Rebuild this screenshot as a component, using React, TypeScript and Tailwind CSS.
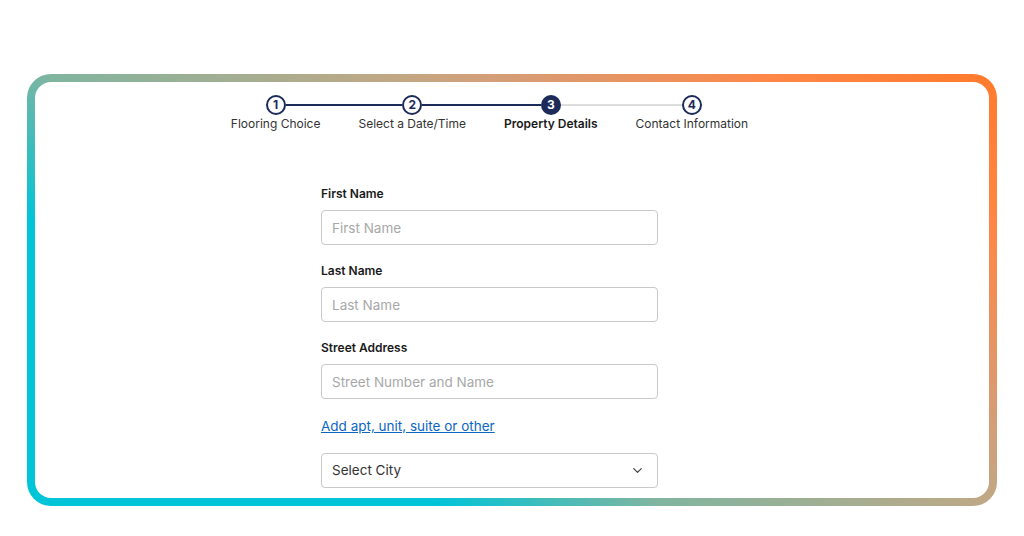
import { ChevronDown } from "lucide-react";

type Step = { n: number; label: string };

const steps: Step[] = [
  { n: 1, label: "Flooring Choice" },
  { n: 2, label: "Select a Date/Time" },
  { n: 3, label: "Property Details" },
  { n: 4, label: "Contact Information" },
];

const current = 3;

function lineClass(done: boolean) {
  return done ? "bg-[#1c2b5a]" : "bg-[#dddddd]";
}

function Stepper() {
  return (
    <div className="flex items-start">
      {steps.map((s, i) => {
        const leftDone = s.n <= current;
        const rightDone = s.n < current;
        return (
          <div key={s.n} className="flex items-start">
            {i > 0 && (
              <div className="flex h-5 w-[38px] items-center">
                <span className={`h-[2px] w-full ${lineClass(leftDone)}`} />
              </div>
            )}
            <div className="flex flex-col items-center">
              <div className="flex h-5 w-full items-center">
                <span className={`h-[2px] flex-1 ${i === 0 ? "bg-transparent" : lineClass(leftDone)}`} />
                {s.n === current ? (
                  <span className="flex h-5 w-5 items-center justify-center rounded-full bg-[#1c2b5a] text-[12px] font-bold leading-none text-white">
                    {s.n}
                  </span>
                ) : (
                  <span className="flex h-5 w-5 items-center justify-center rounded-full border-2 border-[#1c2b5a] bg-white text-[12px] font-bold leading-none text-[#1c2b5a]">
                    {s.n}
                  </span>
                )}
                <span className={`h-[2px] flex-1 ${i === steps.length - 1 ? "bg-transparent" : lineClass(rightDone)}`} />
              </div>
              <span
                className={`mt-[1px] whitespace-nowrap text-[12px] leading-4 ${
                  s.n === current ? "font-semibold text-[#1a1a1a]" : "text-[#333333]"
                }`}
              >
                {s.label}
              </span>
            </div>
          </div>
        );
      })}
    </div>
  );
}

function Field({ label, placeholder }: { label: string; placeholder: string }) {
  return (
    <div className="flex flex-col">
      <label className="text-[12px] font-semibold leading-[18px] text-[#1a1a1a]">{label}</label>
      <input
        placeholder={placeholder}
        className="mt-[7px] h-[35px] w-full rounded-[4px] border border-[#c9c9c9] px-[10px] text-[13.5px] text-[#333] outline-none placeholder:text-[#a8a8a8]"
      />
    </div>
  );
}

export default function App() {
  return (
    <main
      className="min-h-[536px] bg-white pt-[74px]"
      style={{ fontFamily: "Inter, 'Noto Sans', sans-serif" }}
    >
      <div className="ml-[27px] w-[970px] rounded-[24px] bg-[linear-gradient(35deg,#00c4d8_0%,#00c4d8_26%,#80b5a0_40%,#bfa885_61%,#d49e78_68%,#ff8646_86%,#ff7a2c_100%)] p-[8px]">
        <div className="flex h-[416px] flex-col items-center overflow-hidden rounded-[16px] bg-white pr-[45px] pt-[13px]">
          <Stepper />
          <form className="mt-[53px] flex w-[337px] flex-col">
            <Field label="First Name" placeholder="First Name" />
            <div className="mt-[17px]">
              <Field label="Last Name" placeholder="Last Name" />
            </div>
            <div className="mt-[17px]">
              <Field label="Street Address" placeholder="Street Number and Name" />
            </div>
            <a href="#" className="mt-[17px] text-[13.5px] leading-5 text-[#0b66c3] underline">
              Add apt, unit, suite or other
            </a>
            <button
              type="button"
              className="mt-[17px] flex h-[35px] w-full items-center justify-between rounded-[4px] border border-[#c9c9c9] bg-white px-[10px] text-[13.5px] text-[#333]"
            >
              <span>Select City</span>
              <ChevronDown size={15} strokeWidth={2} className="mr-[2px] text-[#444]" />
            </button>
          </form>
        </div>
      </div>
    </main>
  );
}
